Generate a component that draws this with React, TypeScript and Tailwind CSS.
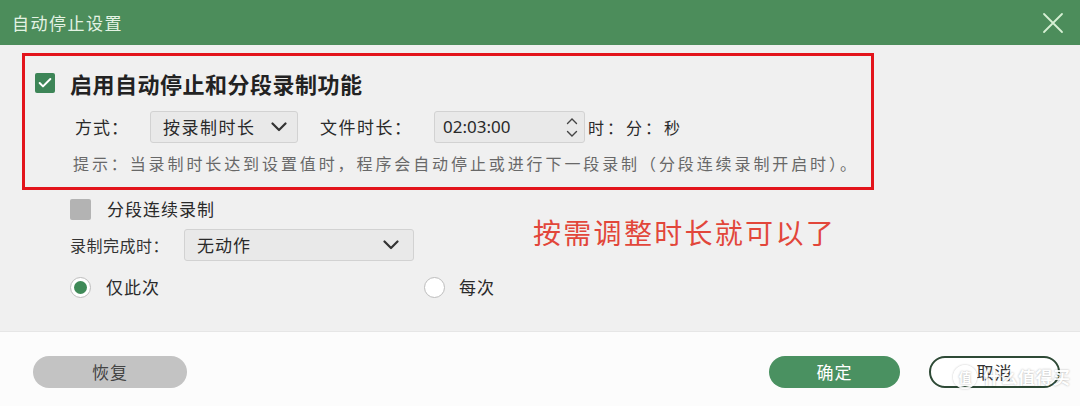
import { Check } from "lucide-react";

const font = { fontFamily: '"Noto Sans CJK SC", "Noto Sans", sans-serif' };

function Chevron({ className = "" }: { className?: string }) {
  return (
    <svg className={className} width="16" height="10" viewBox="0 0 16 10" fill="none">
      <path d="M1.5 1.5 8 8l6.5-6.5" stroke="#333" strokeWidth="2.2" strokeLinecap="round" strokeLinejoin="round" />
    </svg>
  );
}

function Spinner() {
  return (
    <div className="flex flex-col items-center gap-[5px]">
      <svg width="12" height="8" viewBox="0 0 12 8" fill="none">
        <path d="M1.5 6.5 6 2l4.5 4.5" stroke="#444" strokeWidth="1.4" strokeLinecap="round" />
      </svg>
      <svg width="12" height="8" viewBox="0 0 12 8" fill="none">
        <path d="M1.5 1.5 6 6l4.5-4.5" stroke="#444" strokeWidth="1.4" strokeLinecap="round" />
      </svg>
    </div>
  );
}

function Radio({ checked }: { checked?: boolean }) {
  return (
    <div className="flex size-[21px] items-center justify-center rounded-full border border-[#bdbdbd] bg-white">
      {checked && <div className="size-[13px] rounded-full bg-[#3f8a58]" />}
    </div>
  );
}

export default function App() {
  return (
    <div className="relative flex h-[406px] w-[1080px] flex-col bg-[#f0f0f0] text-[#2a2a2a]" style={font}>
      {/* title bar */}
      <div className="flex h-[45px] shrink-0 items-center justify-between bg-[#4c8d5b] pl-[12px] pr-[16px]">
        <span className="text-[17px] tracking-[1.5px] text-[#e4f3e4]">自动停止设置</span>
        <svg width="22" height="22" viewBox="0 0 22 22" fill="none">
          <path d="M2 2l18 18M20 2 2 20" stroke="#d6f0d4" strokeWidth="1.8" strokeLinecap="round" />
        </svg>
      </div>

      {/* body */}
      <div className="relative flex flex-1 flex-col pt-[8px]">
        <div className="ml-[22px] flex w-[852px] flex-col border-[3px] border-[#e3141b] pb-[13px] pt-[12px]">
          <div className="flex h-[30px] items-center gap-[15px] pl-[10px]">
            <div className="flex size-[20px] items-center justify-center rounded-[2px] bg-[#3d8557]">
              <Check className="size-[16px] text-white" strokeWidth={3} />
            </div>
            <span className="text-[22px] font-bold tracking-[0.5px] text-[#222]">启用自动停止和分段录制功能</span>
          </div>

          <div className="mt-[13px] flex h-[32px] items-center pl-[50px] text-[17px]">
            <span className="w-[75px] tracking-[1px]">方式：</span>
            <div className="flex h-[32px] w-[148px] items-center justify-between rounded-[3px] border border-[#d2d2d2] bg-[#e9e9e9] pl-[12px] pr-[10px]">
              <span className="tracking-[1.5px]">按录制时长</span>
              <Chevron />
            </div>
            <span className="ml-[22px] w-[114px] tracking-[1.5px]">文件时长：</span>
            <div className="flex h-[32px] w-[151px] items-center justify-between rounded-[3px] border border-[#d2d2d2] bg-[#e9e9e9] pl-[8px] pr-[6px]">
              <span style={{ fontFamily: '"Noto Sans", "Noto Sans CJK SC", sans-serif' }}>02:03:00</span>
              <Spinner />
            </div>
            <span className="ml-[3px] text-[16px] tracking-[3px]">时：分：秒</span>
          </div>

          <div className="mt-[9px] flex h-[22px] items-center pl-[48px] text-[16px] tracking-[2.9px] text-[#686868]">
            提示：当录制时长达到设置值时，程序会自动停止或进行下一段录制（分段连续录制开启时）。
          </div>
        </div>

        <div className="mt-[8px] flex h-[22px] items-center gap-[16px] pl-[70px]">
          <div className="size-[21px] rounded-[2px] bg-[#b3b3b3]" />
          <span className="text-[17px] tracking-[1px]">分段连续录制</span>
        </div>

        <div className="mt-[9px] flex h-[32px] items-center pl-[70px] text-[16px]">
          <span className="w-[114px] tracking-[0.5px] text-[#333]">录制完成时：</span>
          <div className="flex h-[32px] w-[230px] items-center justify-between rounded-[3px] border border-[#d2d2d2] bg-[#e9e9e9] pl-[12px] pr-[14px]">
            <span className="text-[17px] tracking-[1px]">无动作</span>
            <Chevron />
          </div>
        </div>

        <div className="mt-[11px] flex h-[30px] items-center pl-[70px] text-[17px]">
          <div className="flex w-[354px] items-center gap-[15px]">
            <Radio checked />
            <span className="tracking-[1px]">仅此次</span>
          </div>
          <div className="flex items-center gap-[14px]">
            <Radio />
            <span className="tracking-[1px]">每次</span>
          </div>
        </div>

        {/* annotation */}
        <span className="absolute left-[533px] top-[168px] text-[28px] leading-[38px] tracking-[2.3px] text-[#e2463a]">
          按需调整时长就可以了
        </span>
      </div>

      {/* footer */}
      <div className="flex h-[75px] shrink-0 items-start justify-between border-t border-[#e6e6e6] bg-[#fcfcfc] pl-[33px] pr-[20px] pt-[24px]">
        <button className="flex h-[32px] w-[154px] items-center justify-center rounded-full bg-[#c3c3c3] text-[17px] tracking-[1px] text-[#444]">
          恢复
        </button>
        <div className="flex gap-[29px]">
          <button className="flex h-[32px] w-[131px] items-center justify-center rounded-full bg-[#4a9161] text-[17px] tracking-[1px] text-white">
            确定
          </button>
          <button className="flex h-[32px] w-[131px] items-center justify-center rounded-full border-2 border-[#2e4a36] bg-white text-[17px] tracking-[1px] text-[#333]">
            取消
          </button>
        </div>
      </div>

      {/* watermark */}
      <div className="pointer-events-none absolute left-[953px] top-[364px] flex items-center gap-[6px] text-white opacity-90 [text-shadow:0_0_2px_rgba(0,0,0,0.35)]">
        <div className="flex size-[24px] items-center justify-center rounded-full border-2 border-white text-[13px] font-bold shadow-[0_0_2px_rgba(0,0,0,0.3)]">
          值
        </div>
        <span className="text-[17px] font-bold tracking-[0.5px]">什么值得买</span>
      </div>
    </div>
  );
}
